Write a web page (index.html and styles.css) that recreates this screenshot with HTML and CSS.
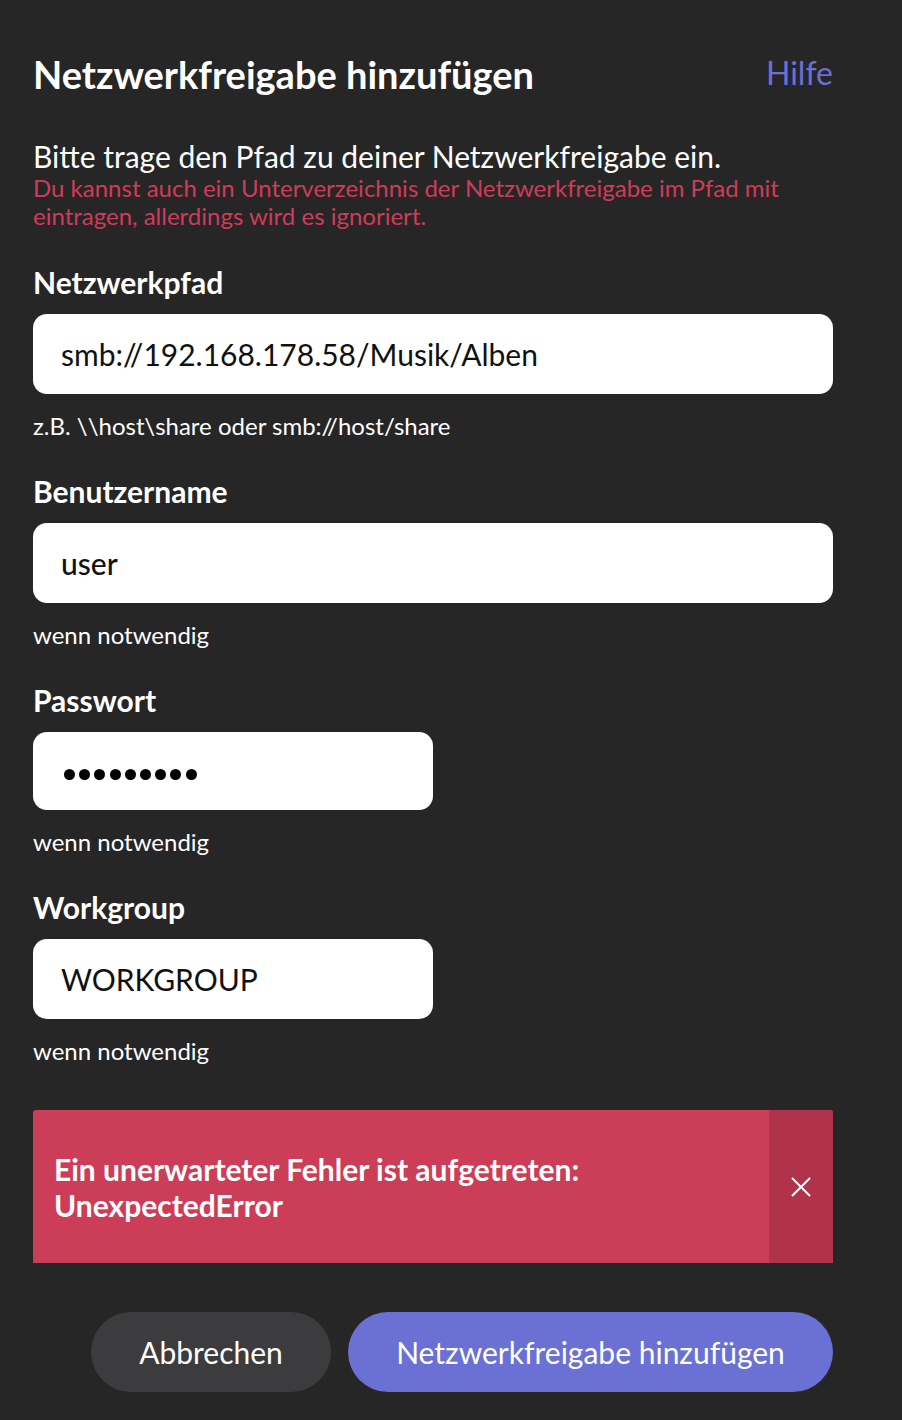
FILE: index.html
```html
<!DOCTYPE html>
<html lang="de">
<head>
<meta charset="utf-8">
<link rel="stylesheet" href="styles.css">
</head>
<body>
<div class="dialog">
  <div class="header">
    <h1 class="title">Netzwerkfreigabe hinzufügen</h1>
    <a class="help">Hilfe</a>
  </div>
  <p class="intro">Bitte trage den Pfad zu deiner Netzwerkfreigabe ein.</p>
  <p class="warn">Du kannst auch ein Unterverzeichnis der Netzwerkfreigabe im Pfad mit eintragen, allerdings wird es ignoriert.</p>

  <div class="field first">
    <div class="label">Netzwerkpfad</div>
    <div class="input wide">smb://192.168.178.58/Musik/Alben</div>
    <div class="hint">z.B. \\host\share oder smb://host/share</div>
  </div>
  <div class="field">
    <div class="label">Benutzername</div>
    <div class="input wide user">user</div>
    <div class="hint">wenn notwendig</div>
  </div>
  <div class="field">
    <div class="label">Passwort</div>
    <div class="input narrow pw"><span class="dot"></span><span class="dot"></span><span class="dot"></span><span class="dot"></span><span class="dot"></span><span class="dot"></span><span class="dot"></span><span class="dot"></span><span class="dot"></span></div>
    <div class="hint">wenn notwendig</div>
  </div>
  <div class="field">
    <div class="label">Workgroup</div>
    <div class="input narrow">WORKGROUP</div>
    <div class="hint">wenn notwendig</div>
  </div>

  <div class="error">
    <div class="error-text">Ein unerwarteter Fehler ist aufgetreten:<br>UnexpectedError</div>
    <div class="error-close">
      <svg width="22" height="22" viewBox="0 0 22 22"><path d="M2 2 L20 20 M20 2 L2 20" stroke="#fff" stroke-width="2" fill="none"/></svg>
    </div>
  </div>

  <div class="actions">
    <button class="btn cancel">Abbrechen</button>
    <button class="btn primary">Netzwerkfreigabe hinzufügen</button>
  </div>
</div>
</body>
</html>
```
FILE: styles.css
```css
html, body {
  margin: 0;
  padding: 0;
  background: #262626;
}
body {
  font-family: Lato, "Open Sans", sans-serif;
  color: #fff;
}
.dialog {
  width: 800px;
  margin-left: 33px;
  padding-top: 52px;
}
.header {
  display: flex;
  justify-content: space-between;
  align-items: center;
  height: 44px;
}
.title {
  margin: 0;
  font-size: 38px;
  font-weight: 700;
  line-height: 44px;
}
.help {
  color: #6c70d6;
  font-size: 32px;
  line-height: 44px;
  margin-top: -3px;
}
.intro {
  margin: 43px 0 0;
  font-size: 30px;
  line-height: 34px;
}
.warn {
  margin: 1px 0 0;
  font-size: 24px;
  line-height: 28px;
  color: #d03b5b;
  padding-right: 40px;
}
.field {
  margin-top: 34px;
}
.field.first {
  margin-top: 35px;
}
.label {
  font-size: 30px;
  font-weight: 700;
  line-height: 34px;
}
.input {
  margin-top: 15px;
  background: #fff;
  border-radius: 14px;
  height: 80px;
  box-sizing: border-box;
  padding-left: 28px;
  display: flex;
  align-items: center;
  color: #111;
  font-size: 30px;
}
.input.wide { width: 800px; }
.input.narrow { width: 400px; }
.input.user { font-weight: 500; }
.input.pw {
  height: 78px;
  padding-left: 31px;
  gap: 4.2px;
}
.dot {
  width: 11px;
  height: 11px;
  border-radius: 50%;
  background: #000;
  margin-top: 7px;
}
.hint {
  margin-top: 18px;
  font-size: 24px;
  line-height: 28px;
}
.error {
  margin-top: 45px;
  height: 153px;
  display: flex;
  background: #cc3d58;
  border-radius: 3px 3px 0 0;
  overflow: hidden;
}
.error-text {
  flex: 1;
  padding-left: 21px;
  display: flex;
  align-items: center;
  font-size: 30px;
  font-weight: 700;
  line-height: 36px;
}
.error-close {
  width: 64px;
  background: #b0334b;
  display: flex;
  align-items: center;
  justify-content: center;
}
.actions {
  margin-top: 49px;
  display: flex;
  justify-content: flex-end;
  gap: 17px;
}
.btn {
  height: 80px;
  border: none;
  border-radius: 40px;
  color: #fff;
  font-family: Lato, "Open Sans", sans-serif;
  font-size: 30px;
  padding: 0;
}
.cancel {
  width: 240px;
  background: #3c3c3e;
}
.primary {
  width: 485px;
  background: #6b70d4;
}
```
